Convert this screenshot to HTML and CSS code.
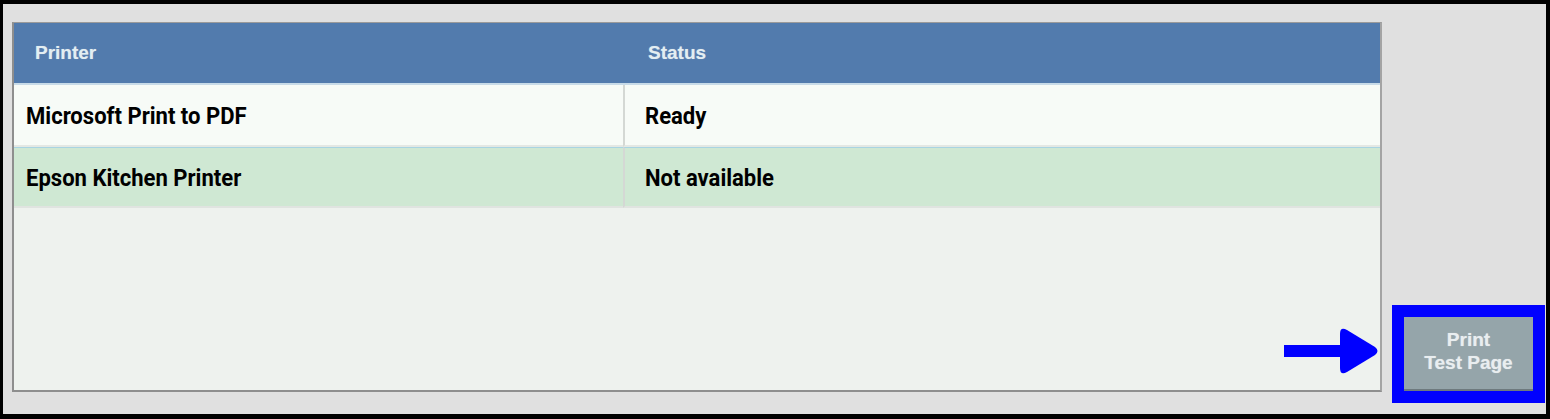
FILE: index.html
```html
<!DOCTYPE html>
<html>
<head>
<meta charset="utf-8">
<link rel="stylesheet" href="styles.css">
</head>
<body>
<div class="frame">
  <div class="panel">
    <div class="grid">
      <div class="hcell">Printer</div>
      <div class="hcell hstatus">Status</div>
      <div class="cell r1"><span class="txt">Microsoft Print to PDF</span></div>
      <div class="cell r1 c2"><span class="txt">Ready</span></div>
      <div class="cell r2"><span class="txt">Epson Kitchen Printer</span></div>
      <div class="cell r2 c2"><span class="txt">Not available</span></div>
    </div>
    <svg class="arrow" width="96" height="54" viewBox="0 0 96 54">
      <rect x="0" y="19" width="60" height="12" fill="#0000ff"/>
      <path d="M56 8 Q56 0 63 4 L91 21 Q96 25 91 29 L63 46 Q56 50 56 42 Z" fill="#0000ff"/>
    </svg>
  </div>
  <div class="side">
    <div class="highlight">
      <button class="btn">Print<br>Test Page</button>
    </div>
  </div>
</div>
</body>
</html>
```
FILE: styles.css
```css
html, body {
  margin: 0;
  padding: 0;
  background: #000;
}
.frame {
  box-sizing: border-box;
  width: 1550px;
  height: 419px;
  border-style: solid;
  border-color: #000;
  border-width: 4px 4px 5px 3px;
  background: #e0e0e0;
  display: flex;
  align-items: flex-start;
}
.panel {
  position: relative;
  box-sizing: border-box;
  margin: 18px 0 0 9px;
  width: 1370px;
  height: 370px;
  background: #eef2ee;
  border: 2px solid #8e8e8e;
  border-top-color: #9a9a9a;
  border-top-width: 1px;
  border-right-color: #a4a4a4;
}
.grid {
  display: grid;
  grid-template-columns: 609px 1fr;
}
.hcell {
  height: 60px;
  background: #527bad;
  color: #e3eef2;
  font-family: "Liberation Sans", Arial, sans-serif;
  font-weight: bold;
  font-size: 19px;
  display: flex;
  align-items: center;
  padding-left: 21px;
  border-bottom: 2px solid #c8dbe8;
  text-shadow: 0 0 1px rgba(255,255,255,0.4);
}
.hcell.hstatus {
  padding-left: 25px;
}
.cell {
  height: 60px;
  display: flex;
  align-items: center;
  padding-left: 12px;
  font-family: Roboto, "Liberation Sans", sans-serif;
  font-weight: 700;
  font-size: 24.5px;
  color: #000;
}
.txt {
  display: inline-block;
  white-space: nowrap;
  transform: scaleX(0.9);
  transform-origin: left center;
}
.cell.c2 {
  border-left: 2px solid #d4d8d4;
  padding-left: 20px;
}
.r1 {
  background: #f7fbf7;
  border-bottom: 2px solid #e4e8e4;
}
.r2 {
  background: #cfe8d3;
  border-top: 1px solid #a9d4e2;
  border-bottom: 2px solid #e0e4e0;
  height: 58px;
}
.arrow {
  position: absolute;
  left: 1270px;
  top: 303px;
}
.side {
  align-self: flex-end;
  margin: 0 0 11px 10px;
}
.highlight {
  box-sizing: border-box;
  width: 153px;
  height: 98px;
  background: #0000ff;
  padding: 12px;
}
.btn {
  display: block;
  box-sizing: border-box;
  width: 129px;
  height: 74px;
  margin: 0;
  padding: 0 0 5px 0;
  border: none;
  border-bottom: 2px solid #6e7a7e;
  background: #95a5aa;
  color: #e9eef0;
  font-family: "Liberation Sans", Arial, sans-serif;
  font-weight: bold;
  font-size: 19px;
  line-height: 23px;
  text-align: center;
  text-shadow: 0 0 1px rgba(255,255,255,0.5);
}
```
